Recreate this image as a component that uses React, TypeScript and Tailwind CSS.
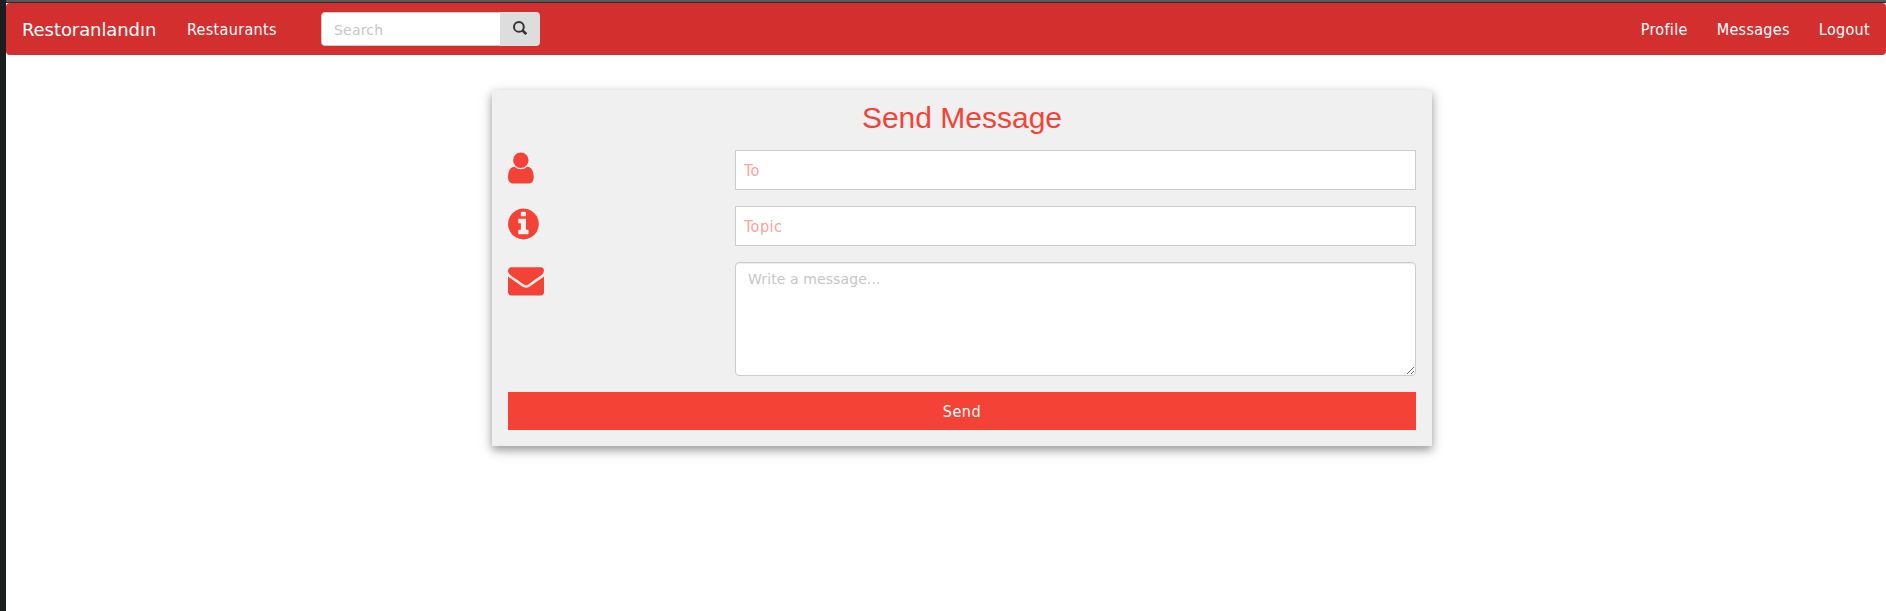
import type { ReactNode } from "react";

const NavLink = ({ children }: { children: ReactNode }) => (
  <a href="#" className="font-['DejaVu_Sans_Condensed','DejaVu_Sans',sans-serif] text-base leading-5 tracking-[0.32px] text-white">
    {children}
  </a>
);

const UserIcon = () => (
  <svg viewBox="256 0 1280 1792" className="h-9 w-[25.7px]" fill="currentColor">
    <path d="M1536 1399q0 109-62.5 187t-150.5 78h-854q-88 0-150.5-78t-62.5-187q0-85 8.5-160.5t31.5-152 58.5-131 94-89 134.5-34.5q131 128 313 128t313-128q76 0 134.5 34.5t94 89 58.5 131 31.5 152 8.5 160.5zm-256-887q0 159-112.5 271.5t-271.5 112.5-271.5-112.5-112.5-271.5 112.5-271.5 271.5-112.5 271.5 112.5 112.5 271.5z" />
  </svg>
);

const InfoIcon = () => (
  <svg viewBox="128 0 1536 1792" className="h-9 w-[30.86px]" fill="currentColor">
    <path d="M1152 1376v-160q0-14-9-23t-23-9h-96v-512q0-14-9-23t-23-9h-320q-14 0-23 9t-9 23v160q0 14 9 23t23 9h96v320h-96q-14 0-23 9t-9 23v160q0 14 9 23t23 9h448q14 0 23-9t9-23zm-128-896v-160q0-14-9-23t-23-9h-192q-14 0-23 9t-9 23v160q0 14 9 23t23 9h192q14 0 23-9t9-23zm640 416q0 209-103 385.5t-279.5 279.5-385.5 103-385.5-103-279.5-279.5-103-385.5 103-385.5 279.5-279.5 385.5-103 385.5 103 279.5 279.5 103 385.5z" />
  </svg>
);

const EnvelopeIcon = () => (
  <svg viewBox="0 0 1792 1792" className="size-9" fill="currentColor">
    <path d="M1792 710v794q0 66-47 113t-113 47h-1472q-66 0-113-47t-47-113v-794q44 49 101 87 362 246 497 345 57 42 92.5 65.5t94.5 48 110 24.5h2q51 0 110-24.5t94.5-48 92.5-65.5q170-123 498-345 57-39 100-87zm0-294q0 79-49 151t-122 123q-376 261-468 325-10 7-42.5 31t-54 38.5-52 32.5-57.5 27-50 9h-2q-23 0-50-9t-57.5-27-52-32.5-54-38.5-42.5-31q-91-64-262-177.5t-205-136.5q-62-42-117-115.5t-55-136.5q0-78 41.5-130t118.5-52h1472q65 0 112.5 47t47.5 113z" />
  </svg>
);

const SearchIcon = () => (
  <svg viewBox="0 0 14 14" className="size-3.5" fill="none" stroke="#333333">
    <circle cx="5.9" cy="5.9" r="4.9" strokeWidth="2" />
    <path d="M9.3 9.3l3.9 3.7" strokeWidth="2.6" />
  </svg>
);

const Row = ({ icon, children }: { icon: ReactNode; children: ReactNode }) => (
  <div className="flex">
    <div className="w-[227px] shrink-0 pt-[0.4px] text-[#f44336]">{icon}</div>
    {children}
  </div>
);

const inputClass =
  "h-10 min-w-0 flex-1 border border-[#cccccc] bg-white px-2 font-['DejaVu_Sans_Condensed','DejaVu_Sans',sans-serif] text-base tracking-[0.5px] text-[#f44336] outline-none placeholder:text-[#faa19b]";

export default function App() {
  return (
    <div className="flex h-[611px] w-full bg-white font-['DejaVu_Sans',sans-serif]">
      <div className="w-1.5 shrink-0 bg-[#1a1e1f]" />
      <div className="flex min-w-0 flex-1 flex-col">
        <div className="h-[3px] shrink-0 border-b border-[#2b2b2d] bg-[#58595b]" />
        <nav className="flex h-[52px] shrink-0 items-center rounded bg-[#d32f2f] px-4">
          <a href="#" className="w-[165px] pt-0.5 text-lg leading-5 tracking-[-0.08px] text-white">
            Restoranlandın
          </a>
          <div className="w-[134px] pt-0.5">
            <NavLink>Restaurants</NavLink>
          </div>
          <form className="flex h-[34px] w-[219px] overflow-hidden rounded">
            <input
              placeholder="Search"
              className="min-w-0 flex-1 rounded-l border border-r-0 border-[#cccccc] bg-white px-3 pt-0.5 text-sm tracking-[0.2px] outline-none placeholder:text-[#c6c6c6]"
            />
            <button type="button" className="flex w-10 items-center justify-center bg-[#dddddd] pb-0.5">
              <SearchIcon />
            </button>
          </form>
          <div className="ml-auto flex gap-[29px] pt-0.5">
            <NavLink>Profile</NavLink>
            <NavLink>Messages</NavLink>
            <NavLink>Logout</NavLink>
          </div>
        </nav>
        <form className="mt-[35px] ml-[486px] flex h-[356px] w-[940px] flex-col gap-4 bg-[#f0f0f0] px-4 pb-4 shadow-[0_4px_8px_0_rgba(0,0,0,0.3),0_4px_14px_0_rgba(0,0,0,0.15)]">
          <h2 className="mt-[10px] h-[34px] text-center font-['Liberation_Sans',Arial,sans-serif] text-[30px] leading-[36px] text-[#f44336]">
            Send Message
          </h2>
          <Row icon={<UserIcon />}>
            <input placeholder="To" className={inputClass} />
          </Row>
          <Row icon={<InfoIcon />}>
            <input placeholder="Topic" className={inputClass} />
          </Row>
          <Row icon={<EnvelopeIcon />}>
            <textarea
              placeholder="Write a message..."
              className="h-[114px] min-w-0 flex-1 resize-y rounded border border-[#cccccc] bg-white px-3 py-1.5 text-sm leading-5 tracking-[0.1px] shadow-[inset_0_1px_1px_rgba(0,0,0,0.075)] outline-none placeholder:text-[#c6c6c6]"
            />
          </Row>
          <button
            type="button"
            className="h-[38px] w-full shrink-0 bg-[#f44336] pt-0.5 font-['DejaVu_Sans_Condensed','DejaVu_Sans',sans-serif] text-base tracking-[0.5px] text-white"
          >
            Send
          </button>
        </form>
      </div>
    </div>
  );
}
